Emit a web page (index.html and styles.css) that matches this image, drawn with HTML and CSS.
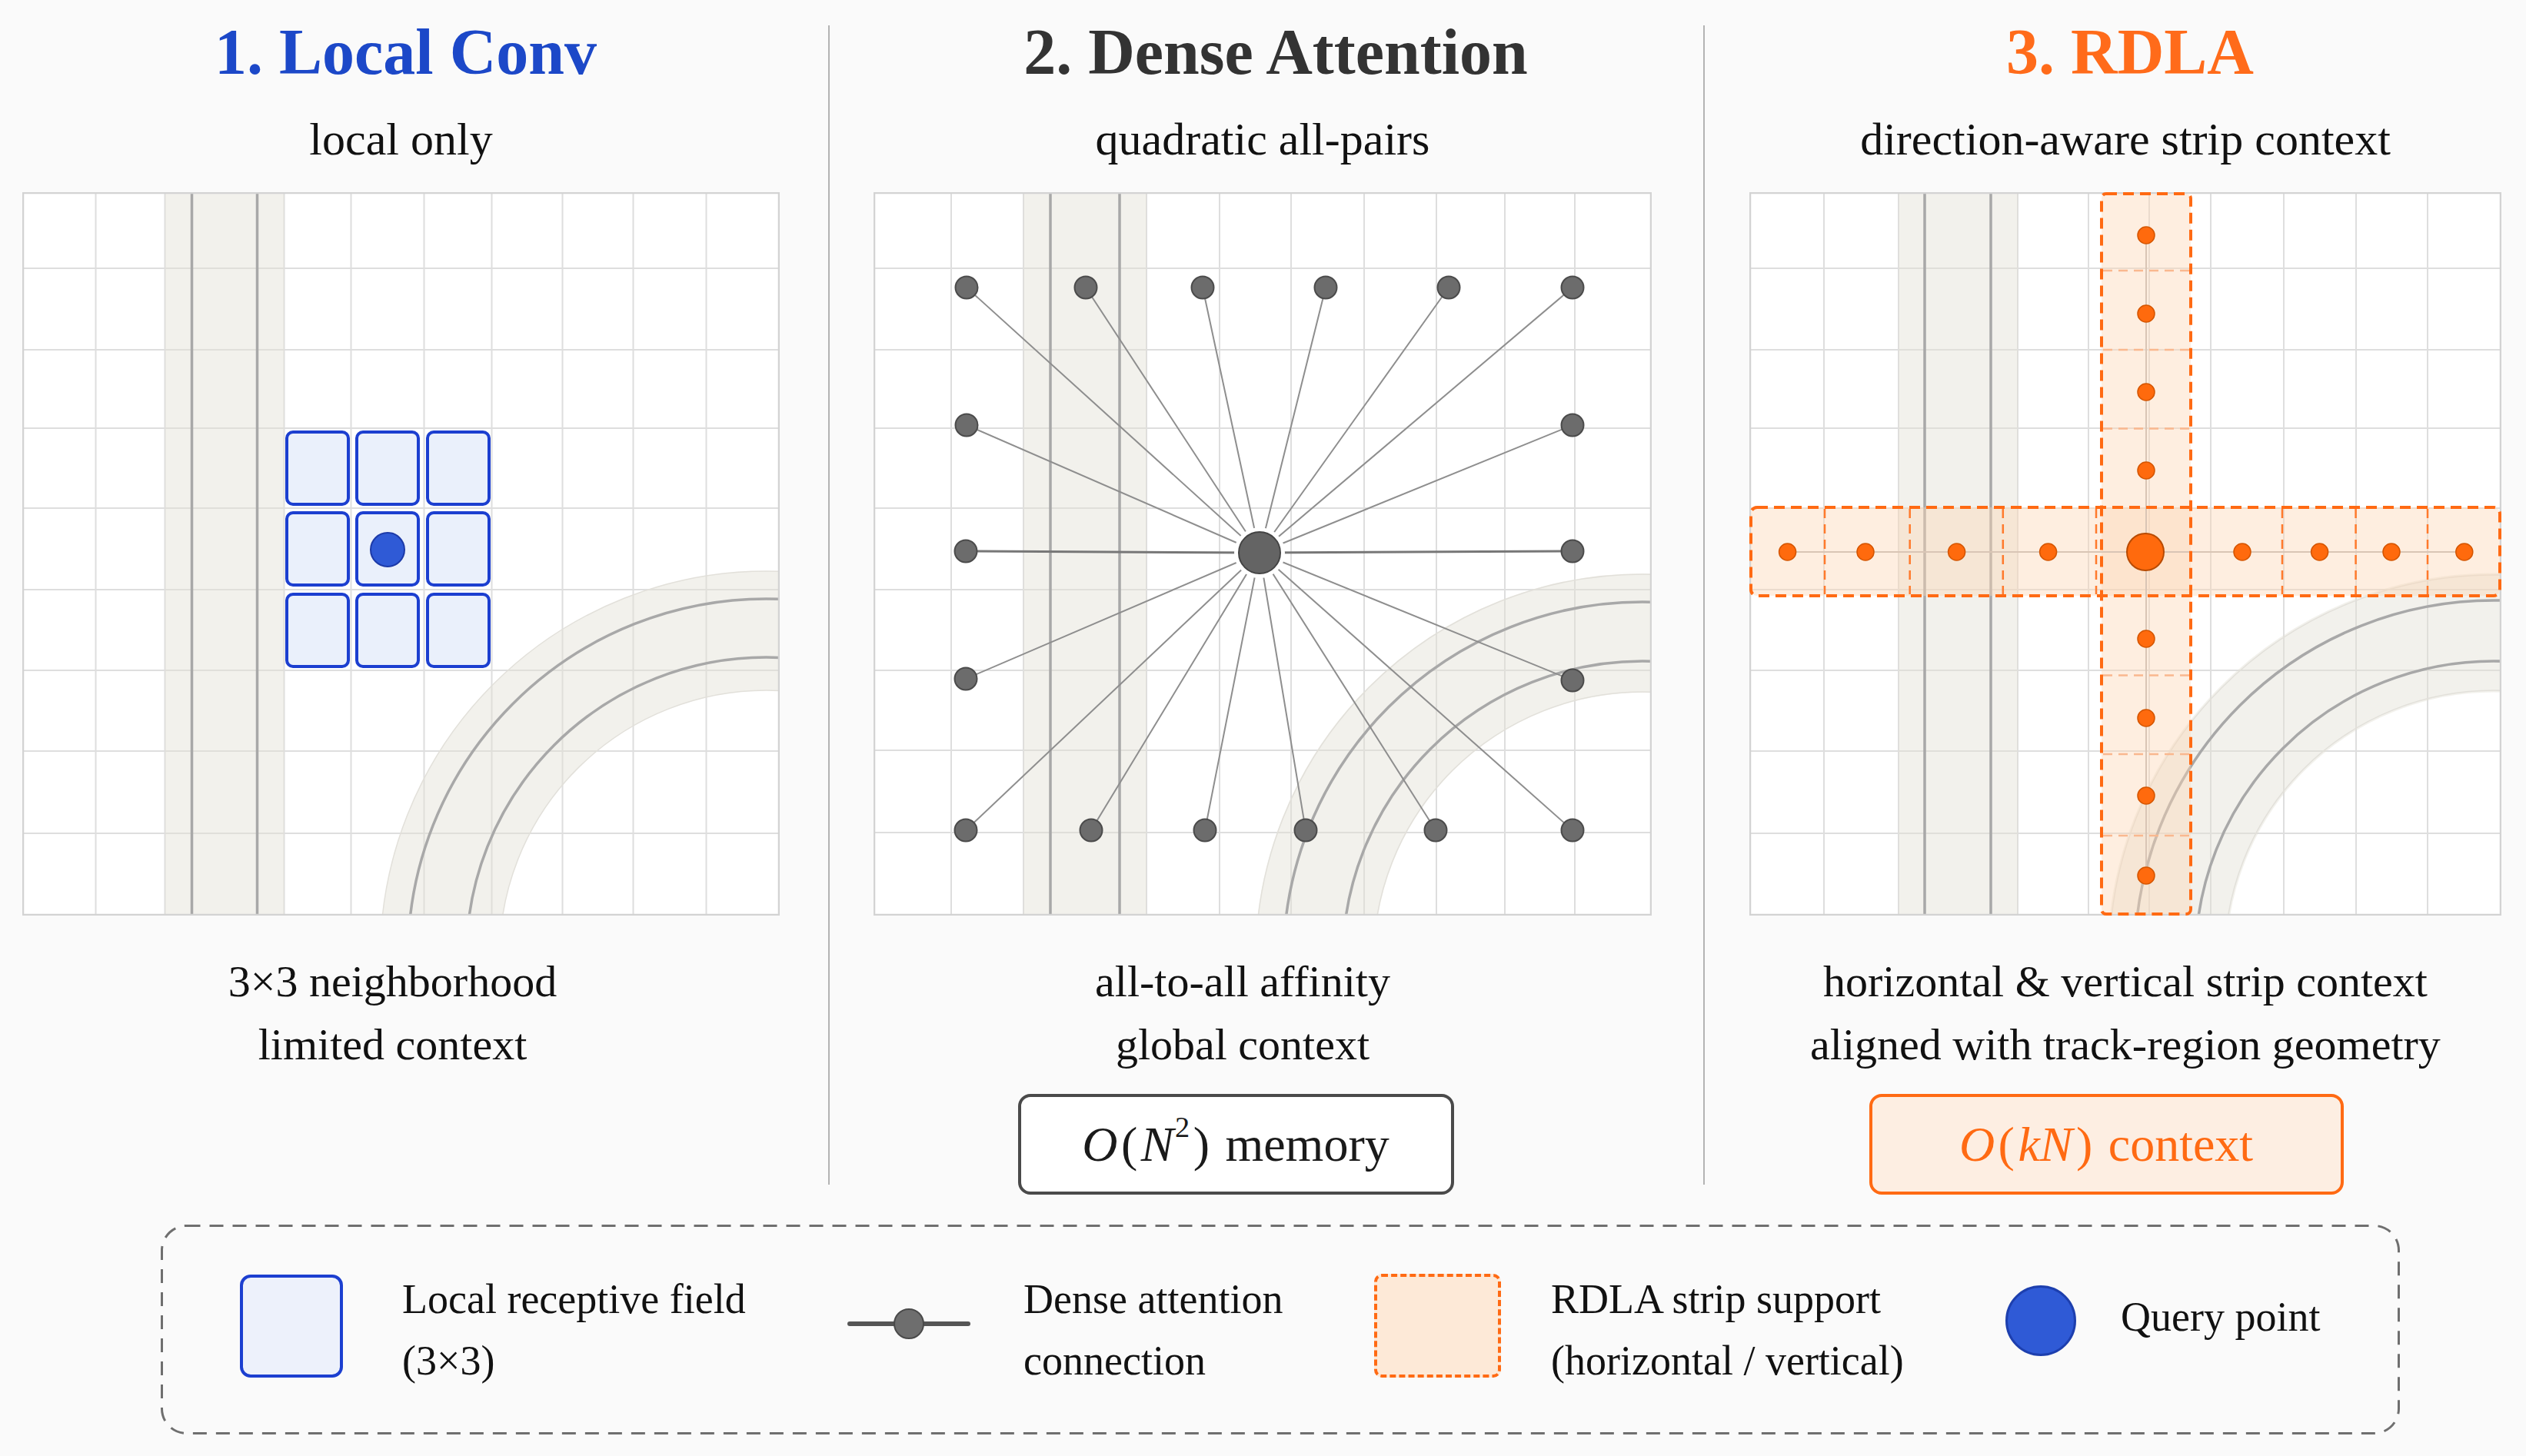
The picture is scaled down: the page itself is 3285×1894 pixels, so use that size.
FILE: index.html
```html
<!DOCTYPE html>
<html lang="en">
<head>
<meta charset="utf-8">
<title>Local Conv vs Dense Attention vs RDLA</title>
<link rel="stylesheet" href="styles.css">
</head>
<body>
<main class="figure">
  <section class="panels">
    <div class="panel panel-local">
      <h2 class="title title-local">1. Local Conv</h2>
      <p class="subtitle">local only</p>
      <svg class="board" width="985" height="941" viewBox="0 0 985 941">
        <rect class="board-bg" x="1" y="1" width="983" height="939"/>
        <path class="grid-line" d="M95.5 0V941M185.5 0V941M340.5 0V941M427.5 0V941M522.5 0V941M610.5 0V941M702.5 0V941M794.5 0V941M889.5 0V941M0 99H985M0 205H985M0 307H985M0 411H985M0 517H985M0 622H985M0 727H985M0 834H985"/>
        <rect class="road-band" x="185.5" y="0" width="155" height="941"/>
        <path class="road-line" d="M220.5 0V941M305.5 0V941"/>
        <circle class="road-arc" cx="967.5" cy="995" r="424.5"/>
        <circle class="road-edge" cx="967.5" cy="995" r="502"/>
        <circle class="road-edge" cx="967.5" cy="995" r="347"/>
        <circle class="road-line" cx="967.5" cy="995" r="466"/>
        <circle class="road-line" cx="967.5" cy="995" r="390"/>
        <rect class="board-frame" x="1" y="1" width="983" height="939"/>
        <rect class="rf-cell" x="344" y="312" width="80" height="94" rx="8"/>
        <rect class="rf-cell" x="435" y="312" width="80" height="94" rx="8"/>
        <rect class="rf-cell" x="527" y="312" width="80" height="94" rx="8"/>
        <rect class="rf-cell" x="344" y="417" width="80" height="94" rx="8"/>
        <rect class="rf-cell" x="435" y="417" width="80" height="94" rx="8"/>
        <rect class="rf-cell" x="527" y="417" width="80" height="94" rx="8"/>
        <rect class="rf-cell" x="344" y="523" width="80" height="94" rx="8"/>
        <rect class="rf-cell" x="435" y="523" width="80" height="94" rx="8"/>
        <rect class="rf-cell" x="527" y="523" width="80" height="94" rx="8"/>
        <circle class="query-dot" cx="475" cy="465" r="22"/>
      </svg>
      <p class="caption caption-local">3×3 neighborhood<br>limited context</p>
    </div>

    <div class="divider divider-first"></div>

    <div class="panel panel-dense">
      <h2 class="title title-dense">2. Dense Attention</h2>
      <p class="subtitle">quadratic all-pairs</p>
      <svg class="board" width="1012" height="941" viewBox="0 0 1012 941">
        <rect class="board-bg" x="1" y="1" width="1010" height="939"/>
        <path class="grid-line" d="M101 0V941M195 0V941M355 0V941M450 0V941M543 0V941M638 0V941M732 0V941M821 0V941M912 0V941M0 99H1012M0 205H1012M0 307H1012M0 411H1012M0 517H1012M0 622H1012M0 726H1012M0 833H1012"/>
        <rect class="road-band" x="195" y="0" width="160" height="941"/>
        <path class="road-line" d="M230 0V941M320 0V941"/>
        <circle class="road-arc" cx="1000" cy="1000" r="426.5"/>
        <circle class="road-edge" cx="1000" cy="1000" r="503"/>
        <circle class="road-edge" cx="1000" cy="1000" r="350"/>
        <circle class="road-line" cx="1000" cy="1000" r="467"/>
        <circle class="road-line" cx="1000" cy="1000" r="390"/>
        <rect class="board-frame" x="1" y="1" width="1010" height="939"/>
        <path class="ray" d="M502 469L121 124M502 469L276 124M502 469L428 124M502 469L588 124M502 469L748 124M502 469L909 124M502 469L121 303M502 469L909 303M502 469L120 633M502 469L909 635M502 469L120 830M502 469L283 830M502 469L431 830M502 469L562 830M502 469L731 830M502 469L909 830"/>
        <path class="ray ray-strong" d="M502 469L120 467M502 469L909 467"/>
        <circle class="node-halo" cx="502" cy="469" r="33"/>
        <circle class="node node-center" cx="502" cy="469" r="27"/>
        <circle class="node" cx="121" cy="124" r="14.5"/>
        <circle class="node" cx="276" cy="124" r="14.5"/>
        <circle class="node" cx="428" cy="124" r="14.5"/>
        <circle class="node" cx="588" cy="124" r="14.5"/>
        <circle class="node" cx="748" cy="124" r="14.5"/>
        <circle class="node" cx="909" cy="124" r="14.5"/>
        <circle class="node" cx="121" cy="303" r="14.5"/>
        <circle class="node" cx="909" cy="303" r="14.5"/>
        <circle class="node" cx="120" cy="467" r="14.5"/>
        <circle class="node" cx="909" cy="467" r="14.5"/>
        <circle class="node" cx="120" cy="633" r="14.5"/>
        <circle class="node" cx="909" cy="635" r="14.5"/>
        <circle class="node" cx="120" cy="830" r="14.5"/>
        <circle class="node" cx="283" cy="830" r="14.5"/>
        <circle class="node" cx="431" cy="830" r="14.5"/>
        <circle class="node" cx="562" cy="830" r="14.5"/>
        <circle class="node" cx="731" cy="830" r="14.5"/>
        <circle class="node" cx="909" cy="830" r="14.5"/>
      </svg>
      <p class="caption caption-dense">all-to-all affinity<br>global context</p>
      <div class="cost cost-dense"><span class="math"><i>O</i><span class="paren">(</span><i>N</i><sup>2</sup><span class="paren">)</span></span>&nbsp;memory</div>
    </div>

    <div class="divider divider-second"></div>

    <div class="panel panel-rdla">
      <h2 class="title title-rdla">3. RDLA</h2>
      <p class="subtitle">direction-aware strip context</p>
      <svg class="board" width="978" height="941" viewBox="0 0 978 941">
        <rect class="board-bg" x="1" y="1" width="976" height="939"/>
        <path class="grid-line" d="M97 0V941M194 0V941M349 0V941M441 0V941M520 0V941M600 0V941M695 0V941M789 0V941M882 0V941M0 99H978M0 205H978M0 307H978M0 411H978M0 517H978M0 622H978M0 727H978M0 834H978"/>
        <rect class="road-band" x="194" y="0" width="155" height="941"/>
        <path class="road-line" d="M228 0V941M314 0V941"/>
        <circle class="road-arc" cx="968" cy="998" r="425"/>
        <circle class="road-edge" cx="968" cy="998" r="500"/>
        <circle class="road-edge" cx="968" cy="998" r="350"/>
        <circle class="road-line" cx="968" cy="998" r="467"/>
        <circle class="road-line" cx="968" cy="998" r="388"/>
        <rect class="board-frame" x="1" y="1" width="976" height="939"/>
        <rect class="strip-fill" x="2" y="410" width="974" height="115" rx="8"/>
        <rect class="strip-fill" x="458" y="2" width="116" height="937" rx="6"/>
        <path class="strip-axis" d="M49 468H930M516 56V889"/>
        <path class="strip-divider" d="M98 412V523M208.7 412V523M329.8 412V523M451 412V523M693 412V523M788.6 412V523M882 412V523"/>
        <path class="strip-divider strip-divider-soft" d="M460 102H572M460 205H572M460 307.5H572M460 628.5H572M460 731H572M460 837H572"/>
        <rect class="strip-outline" x="2" y="410" width="974" height="115" rx="8"/>
        <rect class="strip-outline" x="458" y="2" width="116" height="937" rx="6"/>
        <circle class="strip-dot" cx="49.6" cy="468" r="11"/>
        <circle class="strip-dot" cx="151" cy="468" r="11"/>
        <circle class="strip-dot" cx="269.6" cy="468" r="11"/>
        <circle class="strip-dot" cx="388.6" cy="468" r="11"/>
        <circle class="strip-dot" cx="641" cy="468" r="11"/>
        <circle class="strip-dot" cx="741.6" cy="468" r="11"/>
        <circle class="strip-dot" cx="835" cy="468" r="11"/>
        <circle class="strip-dot" cx="929.8" cy="468" r="11"/>
        <circle class="strip-dot" cx="516" cy="56" r="11"/>
        <circle class="strip-dot" cx="516" cy="158" r="11"/>
        <circle class="strip-dot" cx="516" cy="260" r="11"/>
        <circle class="strip-dot" cx="516" cy="362" r="11"/>
        <circle class="strip-dot" cx="516" cy="581" r="11"/>
        <circle class="strip-dot" cx="516" cy="684" r="11"/>
        <circle class="strip-dot" cx="516" cy="785" r="11"/>
        <circle class="strip-dot" cx="516" cy="889" r="11"/>
        <circle class="strip-dot strip-dot-center" cx="515" cy="468" r="24"/>
      </svg>
      <p class="caption caption-rdla">horizontal &amp; vertical strip context<br>aligned with track-region geometry</p>
      <div class="cost cost-rdla"><span class="math"><i>O</i><span class="paren">(</span><i>kN</i><span class="paren">)</span></span>&nbsp;context</div>
    </div>
  </section>

  <section class="legend">
    <svg class="legend-frame" width="2912" height="273" viewBox="0 0 2912 273">
      <rect class="legend-frame-line" x="1.5" y="1.5" width="2909" height="270" rx="32"/>
    </svg>
    <div class="legend-item">
      <span class="legend-swatch swatch-local"></span>
      <span class="legend-text">Local receptive field<br>(3×3)</span>
    </div>
    <div class="legend-item">
      <svg class="legend-icon" width="160" height="44" viewBox="0 0 160 44">
        <path class="legend-link" d="M3 22H157"/>
        <circle class="legend-node" cx="80" cy="22" r="19"/>
      </svg>
      <span class="legend-text">Dense attention<br>connection</span>
    </div>
    <div class="legend-item">
      <span class="legend-swatch swatch-strip"></span>
      <span class="legend-text">RDLA strip support<br>(horizontal / vertical)</span>
    </div>
    <div class="legend-item">
      <span class="legend-query"></span>
      <span class="legend-text legend-text-single">Query point</span>
    </div>
  </section>
</main>
</body>
</html>
```
FILE: styles.css
```css
* { box-sizing: border-box; }

html, body {
  margin: 0;
  padding: 0;
}

body {
  width: 3285px;
  height: 1894px;
  overflow: hidden;
  background: #fafafa;
  color: #111;
  font-family: "Liberation Serif", "Times New Roman", serif;
}

.figure {
  display: flex;
  flex-direction: column;
}

/* ---------- panels ---------- */
.panels {
  display: flex;
  align-items: flex-start;
  padding-top: 20px;
}

.panel {
  flex: none;
  display: flex;
  flex-direction: column;
  align-items: center;
}

.panel-local { width: 985px; margin-left: 29px; }
.panel-dense { width: 1012px; margin-left: 57px; }
.panel-rdla  { width: 978px;  margin-left: 58px; }

.divider {
  flex: none;
  width: 2px;
  height: 1508px;
  margin-top: 13px;
  background: #b3b3b3;
}
.divider-first  { margin-left: 63px; }
.divider-second { margin-left: 67px; }

.title {
  margin: 0;
  font-size: 84px;
  line-height: 96px;
  font-weight: bold;
  white-space: nowrap;
}
.title-local { color: #1c48c8; margin-left: 12px; }
.title-dense { color: #333333; margin-left: 34px; }
.title-rdla  { color: #ff6b1a; margin-left: 12px; }

.subtitle {
  margin: 29px 0 0;
  font-size: 60px;
  line-height: 72px;
  white-space: nowrap;
  color: #111;
}

.board {
  display: block;
  flex: none;
  margin-top: 33px;
}

.caption {
  margin: 45px 0 0;
  font-size: 58px;
  line-height: 82px;
  text-align: center;
  white-space: nowrap;
  color: #111;
}
.caption-local { margin-right: 22px; }
.caption-dense { margin-right: 52px; }

.cost {
  margin-top: 23px;
  height: 131px;
  display: flex;
  align-items: center;
  justify-content: center;
  border: 4px solid;
  border-radius: 16px;
  font-size: 64px;
  white-space: nowrap;
}
.cost-dense {
  width: 567px;
  margin-right: 70px;
  border-color: #4a4a4a;
  background: #ffffff;
  color: #1a1a1a;
}
.cost-rdla {
  width: 617px;
  margin-right: 50px;
  border-color: #ff6a13;
  background: #fdeee2;
  color: #ff6a13;
}

.math i { font-style: italic; }
.math .paren { margin: 0 0.07em; }
.math sup {
  font-size: 0.6em;
  line-height: 0;
  vertical-align: 0.8em;
  margin-left: 0.04em;
}

/* ---------- board drawing ---------- */
.board-bg { fill: #ffffff; }
.board-frame { fill: none; stroke: #d3d3d3; stroke-width: 2.5; }
.grid-line { fill: none; stroke: #dedede; stroke-width: 2; }

.road-band { fill: rgba(226, 223, 212, 0.45); }
.road-arc { fill: none; stroke: rgba(226, 223, 212, 0.45); stroke-width: 155px; }
.road-edge { fill: none; stroke: #e2e0da; stroke-width: 1.5; }
.road-line { fill: none; stroke: #a8a8a8; stroke-width: 3.5; }

.rf-cell { fill: #eaf0fb; stroke: #1c3fd0; stroke-width: 4; }
.query-dot { fill: #2f5ad6; stroke: #1c3aa8; stroke-width: 2; }

.ray { fill: none; stroke: #8e8e8e; stroke-width: 2; }
.ray-strong { stroke: #777777; stroke-width: 3; }
.node { fill: #6c6c6c; stroke: #4b4b4b; stroke-width: 2; }
.node-center { fill: #646464; stroke: #444444; }
.node-halo { fill: #ffffff; }

.strip-fill { fill: rgba(252, 214, 180, 0.42); }
.strip-axis { fill: none; stroke: #d9c5b5; stroke-width: 2; }
.strip-divider { fill: none; stroke: #ff7a2c; stroke-width: 2.5; stroke-dasharray: 12 8; }
.strip-divider-soft { stroke: #f9b88f; }
.strip-outline { fill: none; stroke: #ff6a13; stroke-width: 4; stroke-dasharray: 14 8; }
.strip-dot { fill: #ff6a0d; stroke: #d45500; stroke-width: 1.5; }
.strip-dot-center { stroke: #b84a00; stroke-width: 2; }

/* ---------- legend ---------- */
.legend {
  position: relative;
  margin: 39px 0 0 209px;
  width: 2912px;
  height: 273px;
  padding-left: 103px;
  display: grid;
  grid-template-columns: 790px 685px 821px auto;
  align-items: center;
}

.legend-frame {
  position: absolute;
  left: 0;
  top: 0;
  pointer-events: none;
}
.legend-frame-line {
  fill: none;
  stroke: #6f6f6f;
  stroke-width: 3;
  stroke-dasharray: 18 12;
}

.legend-item {
  display: flex;
  align-items: center;
}

.legend-text {
  font-size: 54px;
  line-height: 80px;
  white-space: nowrap;
  color: #111;
}
.legend-text-single { margin-bottom: 34px; }

.legend-swatch { flex: none; display: block; }

.swatch-local {
  width: 134px;
  height: 134px;
  margin-right: 77px;
  margin-bottom: 10px;
  border: 4px solid #1c3fd0;
  border-radius: 14px;
  background: #edf1fb;
}

.swatch-strip {
  width: 165px;
  height: 135px;
  margin-right: 65px;
  margin-bottom: 10px;
  border: 4px dashed #ff6a13;
  border-radius: 10px;
  background: #fde9d7;
}

.legend-icon {
  flex: none;
  display: block;
  margin-right: 69px;
  margin-bottom: 16px;
}
.legend-link { fill: none; stroke: #555555; stroke-width: 6; stroke-linecap: round; }
.legend-node { fill: #6e6e6e; stroke: #4a4a4a; stroke-width: 2; }

.legend-query {
  flex: none;
  display: block;
  width: 92px;
  height: 92px;
  margin-right: 58px;
  margin-bottom: 24px;
  border-radius: 50%;
  background: #2f5ad6;
  border: 3px solid #1d3fae;
}
```
